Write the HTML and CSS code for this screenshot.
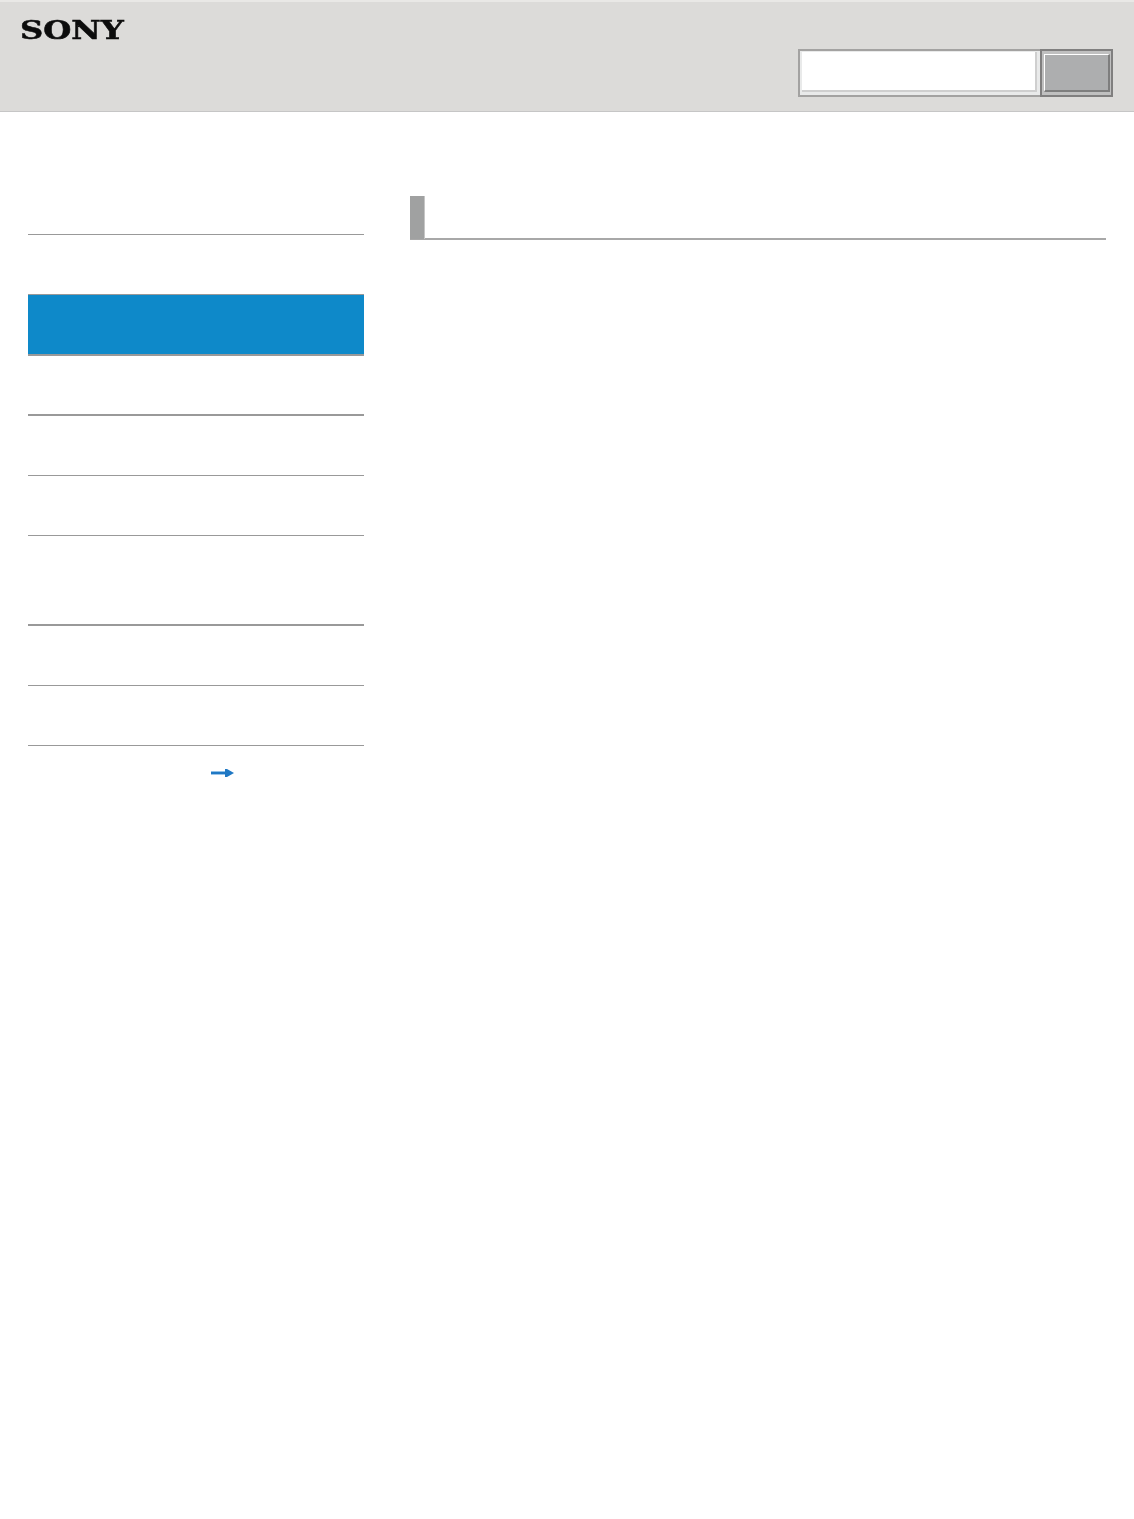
FILE: index.html
```html
<!DOCTYPE html>
<html lang="en">
<head>
  <meta charset="UTF-8">
  <title>Sony Help Guide</title>
  <link rel="stylesheet" href="styles.css">
</head>
<body>

  <!-- Header -->
  <div class="header">
    <div class="logo">SONY</div>
    <div class="search">
      <div class="search-input"><div class="search-field"></div></div>
      <div class="search-button"><div class="search-face"></div></div>
    </div>
  </div>

  <div class="content">
    <!-- Side menu -->
    <div class="sidebar">
      <div class="menu-item first"></div>
      <div class="menu-item"></div>
      <div class="menu-item active"></div>
      <div class="menu-item thick"></div>
      <div class="menu-item"></div>
      <div class="menu-item"></div>
      <div class="menu-item tall thick"></div>
      <div class="menu-item"></div>
      <div class="menu-item"></div>
      <div class="more">
        <svg class="more-arrow" width="23" height="10" viewBox="0 0 23 10">
          <rect x="0" y="3" width="15" height="1" fill="#8fc0e8"/>
          <rect x="0" y="4" width="15" height="2" fill="#1f78c4"/>
          <rect x="0" y="6" width="15" height="1" fill="#9cc6ea"/>
          <path d="M14 1h2l7 4-7 4h-2z" fill="#1f78c4"/>
        </svg>
      </div>
    </div>

    <!-- Main -->
    <div class="main">
      <div class="title"><div class="title-mark"></div></div>
    </div>
  </div>

</body>
</html>
```

FILE: styles.css
```css
body {
  margin: 0;
  background: #fff;
  font-family: "Liberation Sans", Arial, sans-serif;
}

/* Header */
.header {
  box-sizing: border-box;
  height: 112px;
  display: flex;
  justify-content: space-between;
  padding: 0 21px 0 20px;
  background: #dcdbd9;
  border-top: 2px solid #e9e8e6;
  border-bottom: 1px solid #c6c6c6;
}

.logo {
  height: 19px;
  margin-top: 19px;
  font-family: "DejaVu Serif", serif;
  font-weight: bold;
  font-size: 26px;
  line-height: 19px;
  color: #0c0c0c;
  -webkit-text-stroke: 0.5px #0c0c0c;
  transform: scaleX(1.24);
  transform-origin: left center;
  filter: blur(0.5px);
}

.search {
  display: flex;
  align-self: flex-start;
  margin-top: 47px;
  height: 48px;
}

.search-input {
  box-sizing: border-box;
  width: 242px;
  padding: 1px 1px 3px 2px;
  background: #e9eaea;
  border: 2px solid #a3a2a1;
  border-right: 0;
}

.search-field {
  box-sizing: border-box;
  height: 100%;
  background: #fff;
  border-right: 2px solid #cfcfcf;
  border-bottom: 2px solid #cfcfcf;
  margin-right: 2px;
}

.search-button {
  box-sizing: border-box;
  width: 73px;
  padding: 3px 1px 3px 2px;
  background: #c0c0c0;
  border: 2px solid #807f7f;
}

.search-face {
  box-sizing: border-box;
  height: 100%;
  background: #adaeaf;
  border-top: 1px solid #fff;
  border-left: 1px solid #fff;
  border-right: 2px solid #7e7e7e;
  border-bottom: 2px solid #7e7e7e;
}

/* Layout */
.content {
  display: flex;
  padding: 84px 28px 0;
}

.sidebar {
  width: 336px;
  flex-shrink: 0;
}

.menu-item {
  box-sizing: border-box;
  height: 60px;
  border-bottom: 1px solid #999;
}

.menu-item.first {
  height: 39px;
}

.menu-item.thick {
  border-bottom-width: 2px;
}

.menu-item.tall {
  height: 90px;
}

.menu-item.active {
  background: #0e89c9;
  border-top: 1px solid #999;
  border-bottom: 2px solid #999;
  height: 62px;
  margin-top: -1px;
}

.menu-item.active + .menu-item {
  height: 60px;
}

.more {
  display: flex;
  justify-content: flex-end;
  padding: 22px 130px 0 0;
}

.more-arrow {
  display: block;
  filter: blur(0.4px);
}

/* Main */
.main {
  flex: 1;
  margin-left: 46px;
}

.title {
  height: 44px;
  box-sizing: border-box;
  border-bottom: 2px solid #a8a8a8;
}

.title-mark {
  box-sizing: border-box;
  width: 15px;
  height: 43px;
  background: #a0a1a1;
  border-right: 1px solid #c6c6c6;
}
```
